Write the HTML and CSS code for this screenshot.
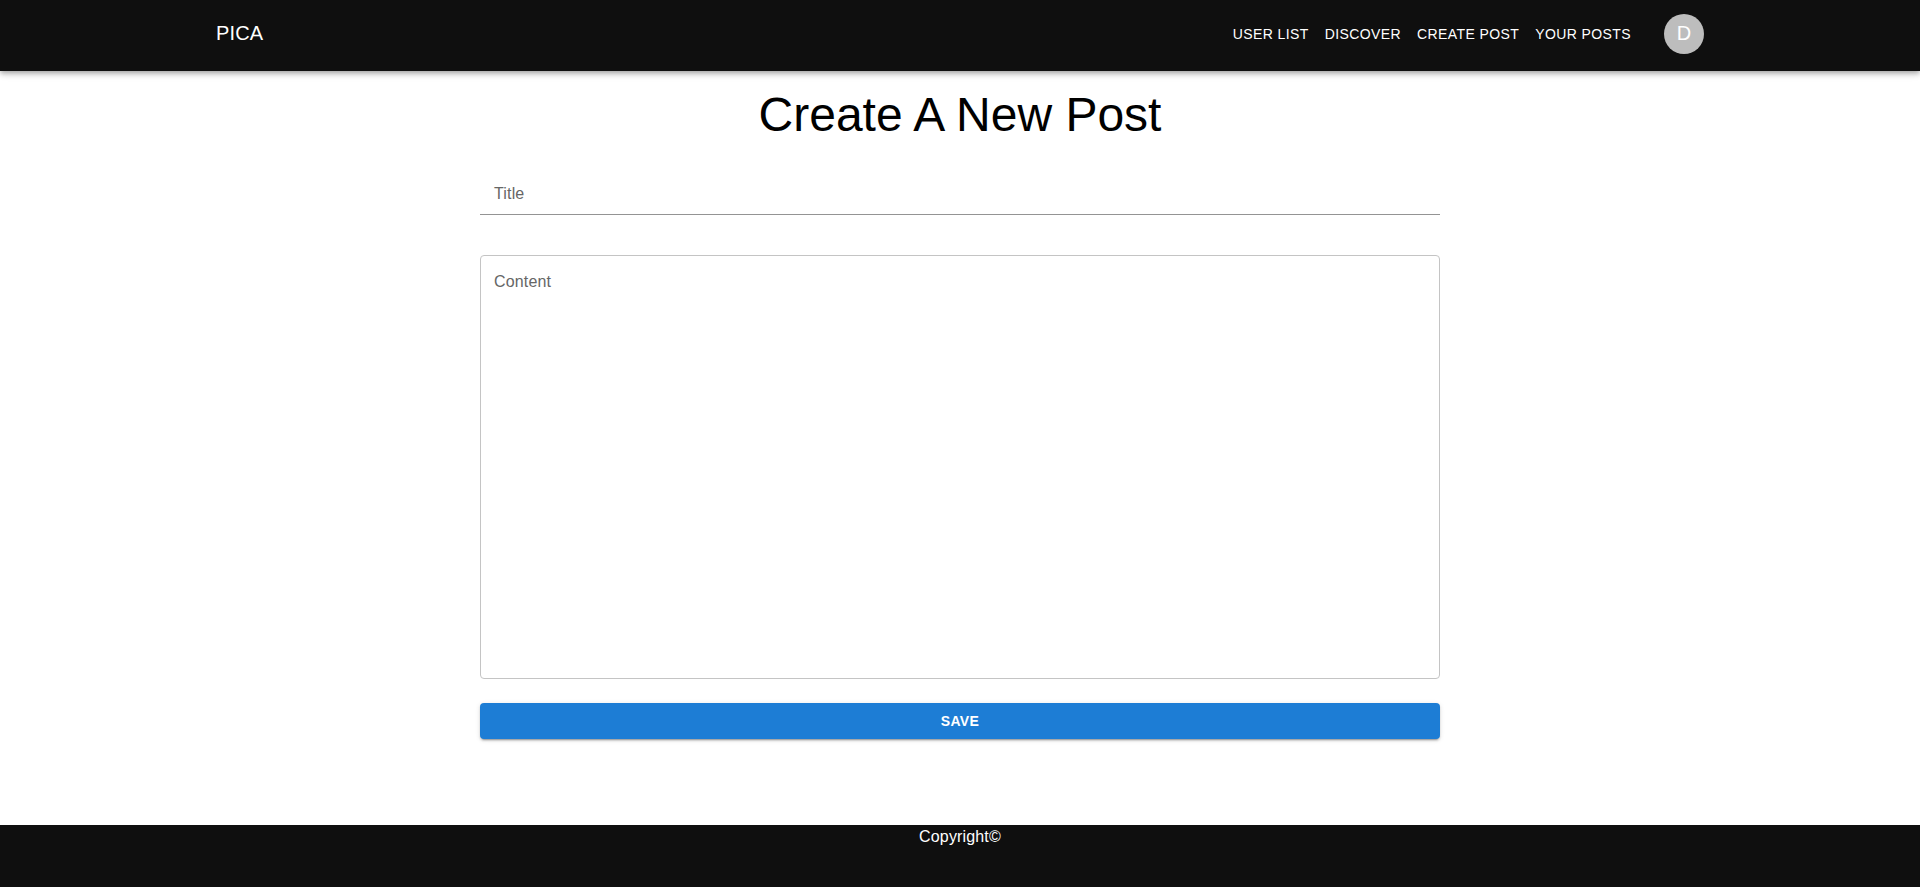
FILE: index.html
```html
<!DOCTYPE html>
<html lang="en">
<head>
<meta charset="utf-8">
<title>PICA</title>
<link rel="stylesheet" href="styles.css">
</head>
<body>
<header class="appbar">
  <div class="toolbar">
    <div class="brand">PICA</div>
    <nav class="nav">
      <a class="nav-link">USER LIST</a>
      <a class="nav-link">DISCOVER</a>
      <a class="nav-link">CREATE POST</a>
      <a class="nav-link">YOUR POSTS</a>
    </nav>
    <div class="avatar">D</div>
  </div>
</header>
<main class="main">
  <h1 class="heading">Create A New Post</h1>
  <form class="form">
    <div class="title-field">Title</div>
    <div class="content-field">Content</div>
    <button class="save" type="button">SAVE</button>
  </form>
</main>
<footer class="footer">Copyright©</footer>
</body>
</html>
```

FILE: styles.css
```css
* { box-sizing: border-box; }
body {
  margin: 0;
  height: 887px;
  display: flex;
  flex-direction: column;
  overflow: hidden;
  background: #fff;
  color: #000;
  font-family: "Liberation Sans", Arial, sans-serif;
}
.appbar {
  height: 71px;
  background: #0f0f0f;
  color: #fff;
  box-shadow: 0 2px 4px -1px rgba(0,0,0,.2), 0 4px 5px rgba(0,0,0,.14), 0 1px 10px rgba(0,0,0,.12);
}
.toolbar {
  width: 1488px;
  height: 68px;
  margin: 0 auto;
  display: flex;
  align-items: center;
}
.brand { flex: 1; padding-bottom: 2px; font-size: 20px; line-height: 32px; letter-spacing: .15px; }
.nav { display: flex; }
.nav-link { padding: 6px 8px; font-size: 14px; line-height: 24.5px; letter-spacing: .4px; }
.avatar {
  width: 40px;
  height: 40px;
  margin-left: 25px;
  border-radius: 50%;
  background: #bdbdbd;
  color: #fff;
  font-size: 20px;
  line-height: 38px;
  text-align: center;
}
.main { flex: 1; }
.heading {
  margin: 16px 0 0;
  font-size: 48px;
  line-height: 56px;
  font-weight: 400;
  text-align: center;
}
.form { width: 960px; margin: 29px auto 0; color: #666; }
.title-field {
  height: 43px;
  padding: 10px 14px;
  border-bottom: 1px solid #949494;
  line-height: 23px;
  letter-spacing: .15px;
}
.content-field {
  height: 424px;
  margin-top: 40px;
  padding: 14px 13px;
  border: 1px solid #c4c4c4;
  border-radius: 4px;
  line-height: 23px;
  letter-spacing: .15px;
}
.save {
  display: block;
  width: 100%;
  height: 36px;
  margin-top: 24px;
  border: 0;
  border-radius: 4px;
  background: #1d7dd5;
  color: #fff;
  font: 700 14px/24px "Liberation Sans", Arial, sans-serif;
  letter-spacing: .4px;
  box-shadow: 0 3px 1px -2px rgba(0,0,0,.2), 0 2px 2px rgba(0,0,0,.14), 0 1px 5px rgba(0,0,0,.12);
}
.footer {
  height: 62px;
  background: #0f0f0f;
  color: #fff;
  line-height: 24px;
  letter-spacing: .15px;
  text-align: center;
}
```
